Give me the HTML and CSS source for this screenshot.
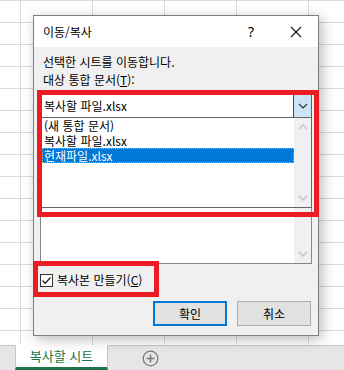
FILE: index.html
```html
<!DOCTYPE html>
<html lang="ko">
<head>
  <meta charset="UTF-8" />
  <title>이동/복사</title>
  <link rel="stylesheet" href="styles.css">
</head>
<body>
  <div class="sheet">
    <div class="dialog">
      <div class="titlebar">
        <span class="title">이동/복사</span>
        <span class="help">?</span>
        <span class="close">
          <svg width="12" height="12" viewBox="0 0 12 12"><path d="M1 1L11 11M11 1L1 11" stroke="#111" stroke-width="1.1" fill="none"/></svg>
        </span>
      </div>

      <div class="body">
        <p class="text">선택한 시트를 이동합니다.</p>
        <p class="text label">대상 통합 문서(<u>T</u>):</p>

        <div class="combo">
          <span class="combo-value">복사할 파일.xlsx</span>
          <span class="combo-btn">
            <svg width="10" height="6" viewBox="0 0 10 6"><path d="M1 1L5 5L9 1" stroke="#333" stroke-width="1.2" fill="none"/></svg>
          </span>

          <div class="dropdown">
            <ul class="items">
              <li>(새 통합 문서)</li>
              <li>복사할 파일.xlsx</li>
              <li class="selected">현재파일.xlsx</li>
            </ul>
            <div class="scrollbar">
              <svg width="10" height="6" viewBox="0 0 10 6"><path d="M1 5L5 1L9 5" stroke="#c2c2c2" stroke-width="1.4" fill="none"/></svg>
              <svg width="10" height="6" viewBox="0 0 10 6"><path d="M1 1L5 5L9 1" stroke="#c2c2c2" stroke-width="1.4" fill="none"/></svg>
            </div>
          </div>
        </div>

        <!-- sheet list, mostly covered by the open dropdown -->
        <div class="listbox">
          <div class="list-area"></div>
          <div class="scrollbar">
            <svg width="10" height="6" viewBox="0 0 10 6"><path d="M1 5L5 1L9 5" stroke="#c2c2c2" stroke-width="1.4" fill="none"/></svg>
            <svg width="10" height="6" viewBox="0 0 10 6"><path d="M1 1L5 5L9 1" stroke="#c2c2c2" stroke-width="1.4" fill="none"/></svg>
          </div>
        </div>

        <label class="check">
          <span class="box">
            <svg width="11" height="11" viewBox="0 0 11 11"><path d="M1.5 5.5L4.2 8.2L9.5 2.5" stroke="#222" stroke-width="1.3" fill="none"/></svg>
          </span>
          <span>복사본 만들기(<u>C</u>)</span>
        </label>

        <div class="buttons">
          <button class="btn default">확인</button>
          <button class="btn">취소</button>
        </div>
      </div>

      <!-- red highlight marks -->
      <div class="mark mark-target"></div>
      <div class="mark mark-copy"></div>
    </div>
  </div>

  <div class="tabs">
    <div class="tab">복사할 시트</div>
    <span class="add">
      <svg width="17" height="17" viewBox="0 0 17 17">
        <circle cx="8.5" cy="8.5" r="7.3" stroke="#7b7b7b" stroke-width="1.3" fill="none"/>
        <path d="M8.5 4.5V12.5M4.5 8.5H12.5" stroke="#7b7b7b" stroke-width="1.6"/>
      </svg>
    </span>
  </div>
</body>
</html>
```

FILE: styles.css
```css
* {
  box-sizing: border-box;
  margin: 0;
  padding: 0;
}

body {
  width: 344px;
  height: 370px;
  overflow: hidden;
  font-family: "Noto Sans CJK KR", "Noto Sans", sans-serif;
  font-size: 12px;
  color: #000;
  background: #fff;
}

/* spreadsheet grid behind the dialog */
.sheet {
  height: 345px;
  padding: 15px 0 0 33px;
  background-color: #fff;
  background-image:
    linear-gradient(to right, #dadada 0, #dadada 1px, transparent 1px),
    linear-gradient(to bottom, #dadada 0, #dadada 1px, transparent 1px);
  background-size: 72px 100%, 100% 22px;
  background-position: 20px 0, 0 0;
}

.dialog {
  position: relative;
  width: 286px;
  height: 321px;
  border: 1px solid #7f7f7f;
  background: #f0f0f0;
  box-shadow: 3px 3px 12px rgba(0, 0, 0, 0.28);
}

.titlebar {
  display: flex;
  align-items: center;
  height: 31px;
  padding-left: 9px;
  background: #fff;
  line-height: 16px;
}

.title {
  flex: 1;
}

.help {
  width: 16px;
  text-align: center;
  font-family: "Noto Sans", sans-serif;
  font-size: 14px;
  margin-right: 14px;
}

.close {
  display: flex;
  align-items: center;
  justify-content: center;
  width: 45px;
  height: 31px;
}

.body {
  padding: 7px 6px 0 6px;
}

.text {
  padding-left: 3px;
  line-height: 16px;
}

.label {
  margin-top: 2px;
}

.combo {
  position: relative;
  display: flex;
  height: 24px;
  margin-top: 6px;
  background: #fff;
  border: 1px solid #0078d7;
}

.combo-value {
  flex: 1;
  padding-left: 3px;
  line-height: 22px;
}

.combo-btn {
  display: flex;
  align-items: center;
  justify-content: center;
  width: 18px;
  background: #cce4f7;
  border-left: 1px solid #005499;
}

.dropdown {
  position: absolute;
  top: 22px;
  left: -1px;
  right: -1px;
  height: 91px;
  z-index: 2;
  display: flex;
  background: #fff;
  border: 1px solid #646464;
}

.items {
  flex: 1;
  list-style: none;
  padding-left: 1px;
}

.items li {
  height: 15px;
  line-height: 15px;
  padding-left: 2px;
  white-space: nowrap;
}

.items li.selected {
  background: #0078d7;
  color: #fff;
  outline: 1px dotted #f0a030;
  outline-offset: -1px;
}

.scrollbar {
  display: flex;
  flex-direction: column;
  justify-content: space-between;
  align-items: center;
  width: 17px;
  padding: 6px 0 6px;
  background: #f0f0f0;
}

.listbox {
  display: flex;
  height: 120px;
  margin-top: 26px;
  background: #fff;
  border: 1px solid #828790;
}

.list-area {
  flex: 1;
}

.check {
  display: flex;
  align-items: center;
  gap: 4px;
  margin-top: 8px;
  line-height: 16px;
}

.box {
  display: flex;
  align-items: center;
  justify-content: center;
  width: 13px;
  height: 13px;
  background: #fff;
  border: 1px solid #333;
}

.buttons {
  display: flex;
  justify-content: flex-end;
  gap: 10px;
  margin: 13px 1px 0 0;
}

.btn {
  width: 74px;
  height: 25px;
  font-family: inherit;
  font-size: 12px;
  color: #000;
  background: #e1e1e1;
  border: 1px solid #adadad;
}

.btn.default {
  border: 2px solid #0078d7;
}

.mark {
  position: absolute;
  border: 5px solid #ed1c24;
  z-index: 3;
}

.mark-target {
  left: 3px;
  top: 74px;
  width: 282px;
  height: 127px;
}

.mark-copy {
  left: -1px;
  top: 245px;
  width: 126px;
  height: 36px;
}

/* sheet tab bar */
.tabs {
  display: flex;
  align-items: center;
  height: 25px;
  background: #e6e6e6;
  border-top: 1px solid #c6c6c6;
}

.tab {
  align-self: stretch;
  width: 93px;
  margin: -1px 0 0 15px;
  text-align: center;
  font-size: 13px;
  line-height: 22px;
  color: #217346;
  background: #fff;
  border-left: 1px solid #c6c6c6;
  border-right: 1px solid #c6c6c6;
  border-bottom: 3px solid #217346;
}

.add {
  display: flex;
  margin-left: 34px;
}
```
